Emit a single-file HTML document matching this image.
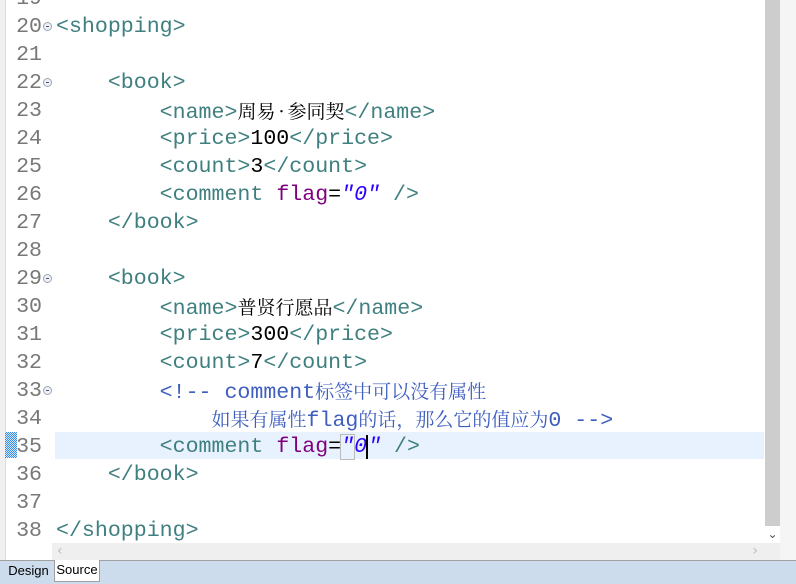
<!DOCTYPE html>
<html><head><meta charset="utf-8"><style>
body{margin:0;width:796px;height:584px;overflow:hidden;background:#fff;position:relative;font-family:"Liberation Mono","DejaVu Sans Mono",monospace;}
.l{position:absolute;left:0;height:28px;line-height:28px;font-size:21.6px;white-space:pre;}
.n{position:absolute;left:8px;width:34px;text-align:right;color:#787878;}
.c{position:absolute;left:56px;}
.t{color:#3f7f7f}.a{color:#7f007f}.v{color:#2a00ff;font-style:italic}.k{color:#3f5fbf}
.z{font-family:"Noto Serif CJK SC","Noto Sans CJK SC",serif;font-size:19px;}
.d{display:inline-block;width:12px;text-align:center}
.f{position:absolute;left:43px;top:9px;width:9px;height:9px;border:1px solid #9aa;border-radius:50%;background:#eef;box-sizing:border-box;}
.f:after{content:"";position:absolute;left:2px;top:3px;width:3px;height:1px;background:#555;}
</style></head><body>
<div style="position:absolute;left:0;top:0;width:5px;height:560px;background:#f0f0f0;border-right:1px solid #ddd"></div>
<div style="position:absolute;left:55px;top:432px;width:709px;height:27px;background:#e8f2fe"></div>
<div style="position:absolute;left:5px;top:432px;width:12px;height:26px;background:repeating-conic-gradient(#3a8ee6 0 25%,#cfe3fa 0 50%) 0 0/2px 2px"></div>
<div style="position:absolute;left:0;top:2px;width:796px;height:560px">
<div class="l" style="top:-17px"><span class="n">19</span></div>
<div class="l" style="top:11px"><span class="n">20</span><i class="f"></i><span class="c"><span class="t">&lt;shopping&gt;</span></span></div>
<div class="l" style="top:39px"><span class="n">21</span></div>
<div class="l" style="top:67px"><span class="n">22</span><i class="f"></i><span class="c">    <span class="t">&lt;book&gt;</span></span></div>
<div class="l" style="top:95px"><span class="n">23</span><span class="c">        <span class="t">&lt;name&gt;</span><span class="z">周易<span class="d">·</span>参同契</span><span class="t">&lt;/name&gt;</span></span></div>
<div class="l" style="top:123px"><span class="n">24</span><span class="c">        <span class="t">&lt;price&gt;</span>100<span class="t">&lt;/price&gt;</span></span></div>
<div class="l" style="top:151px"><span class="n">25</span><span class="c">        <span class="t">&lt;count&gt;</span>3<span class="t">&lt;/count&gt;</span></span></div>
<div class="l" style="top:179px"><span class="n">26</span><span class="c">        <span class="t">&lt;comment </span><span class="a">flag</span>=<span class="v">"0"</span> <span class="t">/&gt;</span></span></div>
<div class="l" style="top:207px"><span class="n">27</span><span class="c">    <span class="t">&lt;/book&gt;</span></span></div>
<div class="l" style="top:235px"><span class="n">28</span></div>
<div class="l" style="top:263px"><span class="n">29</span><i class="f"></i><span class="c">    <span class="t">&lt;book&gt;</span></span></div>
<div class="l" style="top:291px"><span class="n">30</span><span class="c">        <span class="t">&lt;name&gt;</span><span class="z">普贤行愿品</span><span class="t">&lt;/name&gt;</span></span></div>
<div class="l" style="top:319px"><span class="n">31</span><span class="c">        <span class="t">&lt;price&gt;</span>300<span class="t">&lt;/price&gt;</span></span></div>
<div class="l" style="top:347px"><span class="n">32</span><span class="c">        <span class="t">&lt;count&gt;</span>7<span class="t">&lt;/count&gt;</span></span></div>
<div class="l" style="top:375px"><span class="n">33</span><i class="f"></i><span class="c k">        &lt;!-- comment<span class="z">标签中可以没有属性</span></span></div>
<div class="l" style="top:403px"><span class="n">34</span><span class="c k">            <span class="z">如果有属性</span>flag<span class="z">的话，那么它的值应为</span>0 --&gt;</span></div>
<div class="l" style="top:431px"><span class="n">35</span><span class="c">        <span class="t">&lt;comment </span><span class="a">flag</span>=<span class="v"><span style="outline:1px solid #bbb">"</span>0<span style="border-left:2px solid #000;margin-left:-1px">"</span></span> <span class="t">/&gt;</span></span></div>
<div class="l" style="top:459px"><span class="n">36</span><span class="c">    <span class="t">&lt;/book&gt;</span></span></div>
<div class="l" style="top:487px"><span class="n">37</span></div>
<div class="l" style="top:515px"><span class="n">38</span><span class="c"><span class="t">&lt;/shopping&gt;</span></span></div>
</div>
<div style="position:absolute;left:764px;top:0;width:16px;height:543px;background:#fff"></div>
<div style="position:absolute;left:765px;top:0;width:15px;height:526px;background:#cdcdcd"></div>
<div style="position:absolute;left:765px;top:526px;width:15px;height:17px;color:#555;font:12px 'DejaVu Sans';text-align:center;line-height:17px">⌄</div>
<div style="position:absolute;left:780px;top:0;width:16px;height:560px;background:#f5f5f5"></div>
<div style="position:absolute;left:52px;top:543px;width:728px;height:17px;background:#efefef;font:14px 'DejaVu Sans';color:#bbb;line-height:17px"><span style="position:absolute;left:5px">‹</span><span style="position:absolute;right:22px">›</span></div>
<div style="position:absolute;left:0;top:560px;width:796px;height:24px;background:#cddcec;border-top:1px solid #a0a0a0;box-sizing:border-box"></div>
<div style="position:absolute;left:5px;top:561px;width:47px;height:20px;font:13px 'Liberation Sans',sans-serif;line-height:20px;text-align:center;color:#000">Design</div>
<div style="position:absolute;left:54px;top:560px;width:46px;height:22px;background:#fff;border:1px solid #a0a0a0;border-top:none;box-sizing:border-box;font:13px 'Liberation Sans',sans-serif;line-height:20px;text-align:center">Source</div>
</body></html>
